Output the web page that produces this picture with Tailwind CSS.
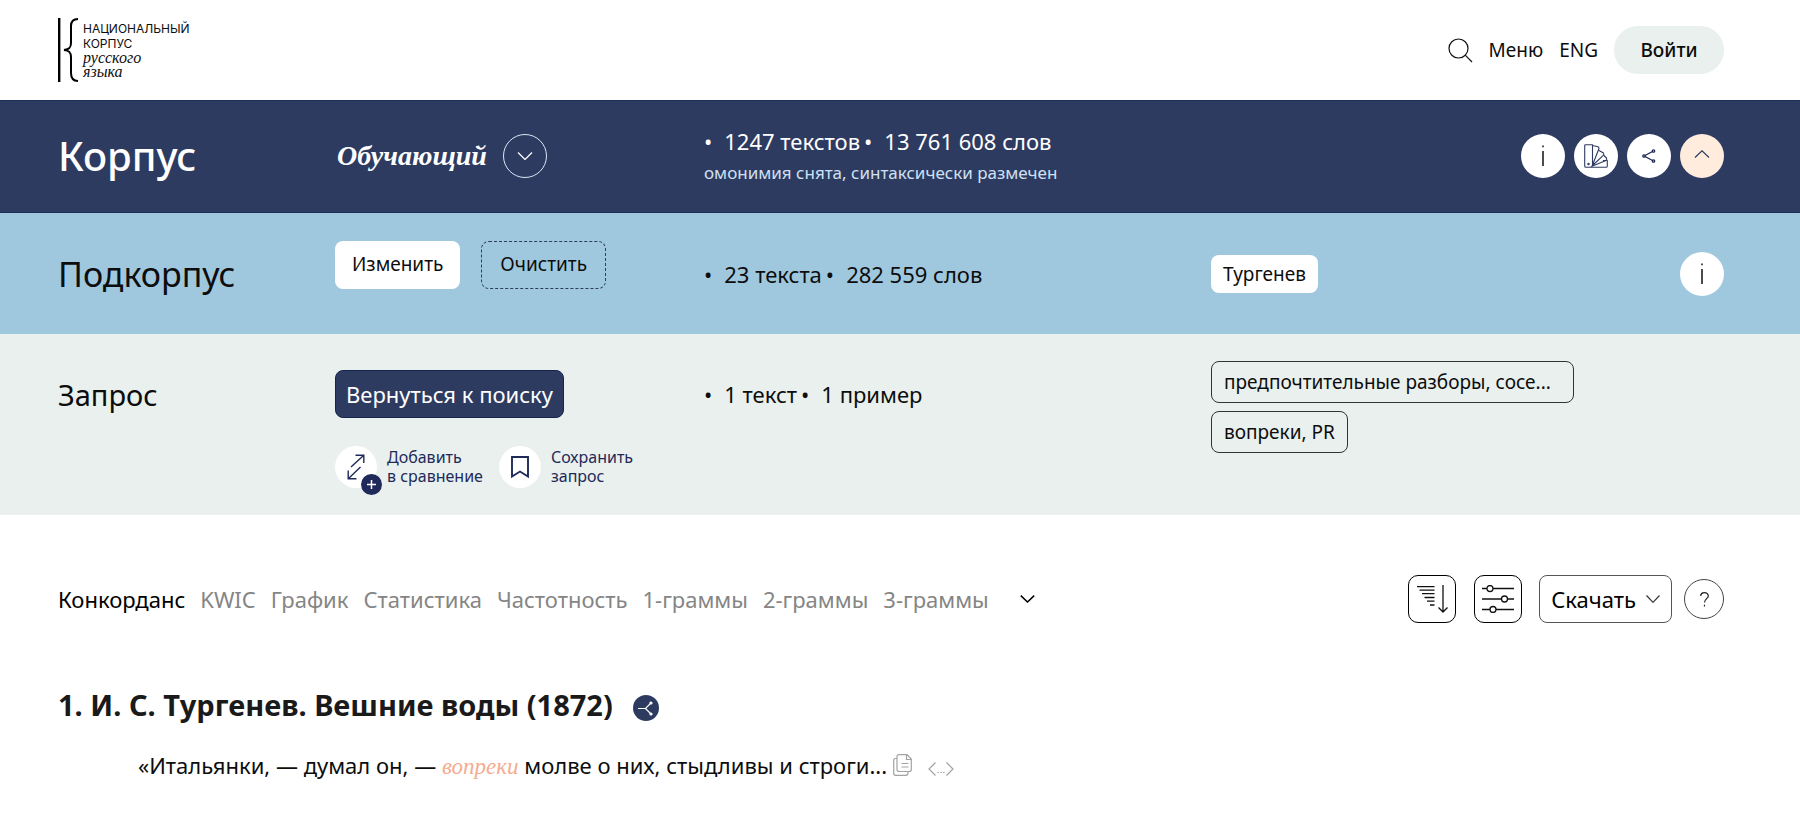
<!DOCTYPE html>
<html lang="ru">
<head>
<meta charset="utf-8">
<title>Национальный корпус русского языка</title>
<script src="https://cdn.jsdelivr.net/npm/@tailwindcss/browser@4"></script>
</head>
<body class="bg-white font-['Noto_Sans',sans-serif] text-[#0d0d0d]">
<header class="flex h-[100px] items-center justify-between pl-[58px] pr-[76px]">
  <a href="#" class="flex items-center gap-1">
    <svg class="h-16 w-[21px]" viewBox="0 0 21 64" fill="none" stroke="#000" stroke-width="2"><path d="M1.200 0V64" stroke-width="2.400"/><path d="M20 1C15 1 13 3.500 13 8V25C13 29.500 11.500 31.500 6 32C11.500 32.500 13 34.500 13 39V55C13 60.500 15 63 20 63"/></svg>
    <span class="flex flex-col font-['Inter',sans-serif] text-[12px] leading-[15px]">
      <span>НАЦИОНАЛЬНЫЙ</span><span>КОРПУС</span>
      <span class="font-['Liberation_Serif',serif] text-[16px] italic leading-[14px]">русского</span>
      <span class="font-['Liberation_Serif',serif] text-[16px] italic leading-[14px]">языка</span>
    </span>
  </a>
  <nav class="flex items-center gap-4 text-[19px]">
    <button aria-label="Поиск"><svg class="size-[25px]" viewBox="0 0 25 25" fill="none" stroke="#111" stroke-width="1.200"><circle cx="10.500" cy="10.500" r="9.500"/><path d="M17.200 17.200L24 24"/></svg></button>
    <a href="#">Меню</a>
    <a href="#">ENG</a>
    <button class="h-12 w-[110px] rounded-full bg-[#e9f0ee] font-medium">Войти</button>
  </nav>
</header>

<section class="grid h-[113px] grid-cols-[277fr_369fr_507fr_513fr] items-center border-y border-[#1d2f58] bg-[#2e3b61] pb-0.5 pl-[58px] pr-[76px] text-white">
  <h1 class="text-[40px] font-medium leading-none">Корпус</h1>
  <div class="flex items-center gap-4 pl-0.5">
    <span class="font-['Liberation_Serif',serif] text-[28px] font-bold italic leading-none">Обучающий</span>
    <button aria-label="Выбрать корпус" class="flex size-11 items-center justify-center rounded-full border border-[#dbe6f7]"><svg class="h-2 w-4" viewBox="0 0 16 8" fill="none" stroke="#fff" stroke-width="1.200"><path d="M1 .5L8 7.500L15 .5"/></svg></button>
  </div>
  <div class="flex flex-col pt-0.5">
    <p class="flex gap-1 text-[22px] leading-8"><span><span class="mr-3">•</span>1247 текстов</span><span><span class="mr-3">•</span>13 761 608 слов</span></p>
    <p class="text-[17px] leading-8 text-[#cfe0f3]">омонимия снята, синтаксически размечен</p>
  </div>
  <div class="flex justify-end gap-[9px]">
    <button aria-label="О корпусе" class="flex size-11 items-center justify-center rounded-full bg-white"><svg class="h-[22px] w-1" viewBox="0 0 4 22" fill="none" stroke="#000" stroke-width="1.400"><path d="M2 .5V2.300M2 6V21"/></svg></button>
    <button aria-label="Портрет" class="flex size-11 items-center justify-center rounded-full bg-white"><svg class="size-6" viewBox="0 0 24 24" fill="none" stroke="#2e3b61" stroke-width="1.100" stroke-linejoin="round"><path d="M.7 1.500Q.7.700 1.500.7H8.500V21Q8 23.300 5.500 23.300H2Q.7 23.300.7 22ZM8.500 1.500L14 2.700Q15 3 15 4.500L8.500 21M15 6.500L19.500 9Q20.300 10 19.300 11.300L8.500 21.500M20 11.500L22.500 14Q23.200 15.500 22 16.500L8.500 22M19 16.500H23.300V22Q23.300 23.300 22 23.300H5"/><circle cx="4.500" cy="20" r=".7"/></svg></button>
    <button aria-label="Поделиться" class="flex size-11 items-center justify-center rounded-full bg-white"><svg class="size-[14px]" viewBox="0 0 14 14" fill="none" stroke="#1b2550" stroke-width="1.300"><path d="M10.500 2.500L3 6.500M3 7.500L10.500 11.500"/><circle cx="11.500" cy="2" r="1.200"/><circle cx="2" cy="7" r="1.200"/><circle cx="11.500" cy="12" r="1.200"/></svg></button>
    <button aria-label="Свернуть" class="flex size-11 items-center justify-center rounded-full bg-[#ffecdd]"><svg class="mb-1 h-2 w-4" viewBox="0 0 16 8" fill="none" stroke="#2e3b61" stroke-width="1.200"><path d="M1 7.500L8 .8L15 7.500"/></svg></button>
  </div>
</section>

<section class="grid h-[121px] grid-cols-[277fr_369fr_507fr_513fr] items-center bg-[#9fc8de] pl-[58px] pr-[76px]">
  <h2 class="text-[34px] leading-none">Подкорпус</h2>
  <div class="mb-[18px] flex gap-[21px] text-[19px]">
    <button class="h-12 rounded-lg bg-white px-[17px]">Изменить</button>
    <button class="h-12 rounded-lg border border-dashed border-[#2e3b61] px-[18px]">Очистить</button>
  </div>
  <p class="flex gap-1 text-[22px] leading-8"><span><span class="mr-3">•</span>23 текста</span><span><span class="mr-3">•</span>282 559 слов</span></p>
  <div class="flex items-center justify-between">
    <span class="rounded-lg bg-white px-3 text-[19px] leading-[38px]">Тургенев</span>
    <button aria-label="О подкорпусе" class="flex size-11 items-center justify-center rounded-full bg-white"><svg class="h-[22px] w-1" viewBox="0 0 4 22" fill="none" stroke="#000" stroke-width="1.400"><path d="M2 .5V2.300M2 6V21"/></svg></button>
  </div>
</section>

<section class="grid h-[181px] grid-cols-[277fr_369fr_507fr_513fr] items-start bg-[#e9f0ee] pl-[58px] pr-[76px] pt-[27px]">
  <h2 class="pt-1 text-[29px] leading-[60px]">Запрос</h2>
  <div class="flex flex-col items-start gap-7 pt-[9px]">
    <button class="h-12 rounded-lg border border-[#16254f] bg-[#2e3b61] px-2.5 text-[22px] text-white">Вернуться к поиску</button>
    <div class="flex gap-4 text-[16px] leading-[19px] text-[#1f2a5a]">
      <button class="flex items-center gap-2.5 text-left">
        <span class="relative flex size-[42px] items-center justify-center rounded-full bg-white">
          <svg class="h-[26px] w-[18px]" viewBox="0 0 18 26" fill="none" stroke="#1f2a5a" stroke-width="1.400"><path d="M4 13L16.500 1.500M8.500 1.200H16.800V9M13.500 13L1.500 24.500M1.200 16.500V24.800H9.500"/></svg>
          <span class="absolute -bottom-[7px] -right-[5px] flex size-[21px] items-center justify-center rounded-full bg-[#1f2a5a]"><svg class="size-[9px]" viewBox="0 0 9 9" stroke="#fff" stroke-width="1.500"><path d="M4.500 0V9M0 4.500H9"/></svg></span>
        </span>
        <span>Добавить<br>в сравнение</span>
      </button>
      <button class="flex items-center gap-2.5 text-left">
        <span class="flex size-[42px] items-center justify-center rounded-full bg-white"><svg class="h-[22px] w-[18px]" viewBox="0 0 18 22" fill="none" stroke="#1f2a5a" stroke-width="1.900"><path d="M1 1H17V20.500L9 15.500L1 20.500Z"/></svg></span>
        <span>Сохранить<br>запрос</span>
      </button>
    </div>
  </div>
  <p class="flex gap-1 text-[22px] leading-[66px]"><span><span class="mr-3">•</span>1 текст</span><span><span class="mr-3">•</span>1 пример</span></p>
  <div class="flex flex-col items-start gap-2 text-[19px] leading-10">
    <span class="w-[363px] truncate rounded-lg border border-[#333] px-3">предпочтительные разборы, сосе...</span>
    <span class="rounded-lg border border-[#333] px-3">вопреки, PR</span>
  </div>
</section>

<main class="pl-[58px] pr-[76px] pt-[60px]">
  <div class="flex items-center justify-between text-[22px]">
    <nav class="flex items-center gap-[15px] text-[#858585]">
      <a href="#" class="text-black">Конкорданс</a>
      <a href="#">KWIC</a>
      <a href="#">График</a>
      <a href="#">Статистика</a>
      <a href="#">Частотность</a>
      <a href="#">1-граммы</a>
      <a href="#">2-граммы</a>
      <a href="#">3-граммы</a>
      <button aria-label="Ещё" class="ml-4"><svg class="h-2 w-[15px]" viewBox="0 0 15 8" fill="none" stroke="#000" stroke-width="1.500"><path d="M.8.600L7.500 7L14.200.6"/></svg></button>
    </nav>
    <div class="flex items-center">
      <button aria-label="Сортировка" class="flex size-12 items-center justify-center rounded-[10px] border border-black"><svg class="h-7 w-[31px]" viewBox="0 0 31 28" fill="none" stroke="#111" stroke-width="1.300"><path d="M0 1.700H17.500M2.500 5.200H17.500M5 8.700H17.500M7.500 12.500H17.500M10 16.200H17.500M13 20H17.500M26 0V26.500M21.500 22.500L26 27L30.500 22.500"/></svg></button>
      <button aria-label="Настройки" class="ml-[18px] flex size-12 items-center justify-center rounded-[10px] border border-black"><svg class="h-7 w-8" viewBox="0 0 32 28" fill="none" stroke="#111" stroke-width="1.300"><path d="M0 3.500H5M11 3.500H32M0 14H19.500M25.500 14H32M0 24.500H8M14 24.500H32"/><circle cx="8" cy="3.500" r="3"/><circle cx="22.500" cy="14" r="3"/><circle cx="11" cy="24.500" r="3"/></svg></button>
      <button class="ml-[17px] flex h-12 items-center gap-2.5 rounded-lg border border-[#555] px-[11px] text-black">Скачать <svg class="h-2 w-[14px]" viewBox="0 0 14 8" fill="none" stroke="#333" stroke-width="1.200"><path d="M.5.500L7 7.300L13.500.5"/></svg></button>
      <button aria-label="Справка" class="ml-3 flex size-10 items-center justify-center rounded-full border border-[#444]"><svg class="h-[15px] w-[9px]" viewBox="0 0 9 15" fill="none" stroke="#222" stroke-width="1.200"><path d="M.7 4C.7-.5 8.300-.5 8.300 4C8.300 6.500 4.500 7 4.500 10.500M4.500 12.800V14.500"/></svg></button>
    </div>
  </div>
  <div class="mt-[62px] flex items-center gap-5">
    <h3 class="text-[29px] font-bold leading-10 text-[#1a1a1a]">1. И. С. Тургенев. Вешние воды (1872)</h3>
    <button aria-label="Структура" class="mt-1.5 flex size-[26px] items-center justify-center rounded-full bg-[#2e3b61]"><svg class="size-[15px]" viewBox="0 0 15 15" fill="none" stroke="#fff" stroke-width="1.200"><path d="M0 7.500H7.500L13 2M7.500 7.500L13 13"/><circle cx="13" cy="2" r="1" fill="#fff"/><circle cx="13" cy="13" r="1" fill="#fff"/></svg></button>
  </div>
  <div class="mt-5 flex items-center pl-20 text-[22px] leading-10">
    <p>«Итальянки, — думал он, — <em class="font-['Liberation_Serif',serif] text-[23px] leading-none text-[#f4ac90]">вопреки</em> молве о них, стыдливы и строги...</p>
    <button aria-label="Копировать" class="ml-1.5"><svg class="h-[22px] w-[19px]" viewBox="0 0 19 22" fill="none" stroke="#a3a3a3" stroke-width="1.200"><path d="M6 .7H14L18.300 5V15.500Q18.300 17.500 16.300 17.500H6Q4 17.500 4 15.500V2.700Q4 .7 6 .7ZM13.500 1V5.500H18M4 4.500H2.700Q.7 4.500.7 6.500V19.300Q.7 21.300 2.700 21.300H12.500Q15 21.300 15 19V17.500M8.500 9.500H15.500M8.500 13H15.500"/></svg></button>
    <button aria-label="Расширить контекст" class="ml-4 mt-2"><svg class="h-[14px] w-[26px]" viewBox="0 0 26 14" fill="none" stroke="#a3a3a3" stroke-width="1.200"><path d="M7.500.500L1 7L7.500 13.500M18.500.5L25 7L18.500 13.500"/><path d="M9.500 10.500H11M12.300 10.500H13.800M15.100 10.500H16.600"/></svg></button>
  </div>
</main>
</body>
</html>
